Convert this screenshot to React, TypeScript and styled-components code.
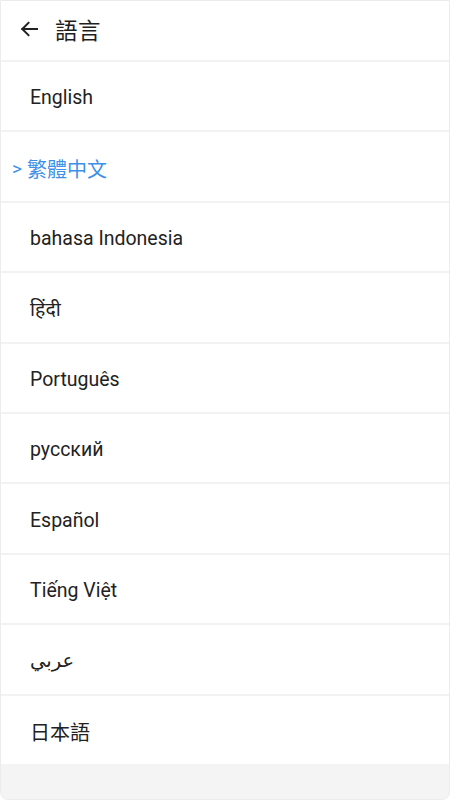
import React from "react";
import styled, { createGlobalStyle } from "styled-components";

const Global = createGlobalStyle`
  html, body { margin: 0; padding: 0; background: #ffffff; }
  body { font-family: Roboto, "Noto Sans", "Noto Sans CJK TC", sans-serif; }
  * { box-sizing: border-box; }
`;

const Frame = styled.div`
  width: 450px;
  height: 800px;
  background: #f4f4f4;
  border: 1px solid #ececec;
  border-radius: 0 0 8px 8px;
  overflow: hidden;
  display: flex;
  flex-direction: column;
`;

const Header = styled.header`
  height: 59px;
  background: #fff;
  display: flex;
  align-items: center;
  padding-left: 17px;
  padding-bottom: 3px;
  gap: 15px;
`;

const BackButton = styled.button`
  border: 0;
  background: none;
  padding: 0;
  width: 22px;
  height: 22px;
  display: flex;
  align-items: center;
  justify-content: center;
  color: #222;
`;

const Title = styled.h1`
  margin: 0;
  font-size: 22.5px;
  font-weight: 400;
  color: #1e1e1e;
  font-family: "Noto Sans CJK TC", sans-serif;
  letter-spacing: 0.5px;
  line-height: 1;
`;

const List = styled.ul`
  list-style: none;
  margin: 0;
  padding: 0;
  background: #fff;
`;

const Row = styled.li<{ $active?: boolean }>`
  height: 70.4px;
  border-top: 2.4px solid #f2f2f2;
  display: flex;
  align-items: center;
  padding-top: 3px;
  padding-left: ${(p) => (p.$active ? "11px" : "29px")};
  font-size: 19.5px;
  color: ${(p) => (p.$active ? "#3d8fe8" : "#222")};
  font-family: Roboto, "Noto Sans", "Noto Sans Devanagari", "DejaVu Sans", "Noto Sans CJK TC", sans-serif;
`;

const Marker = styled.span`
  margin-right: 5px;
  font-size: 19px;
`;

const CJK = styled.span`
  font-family: "Noto Sans CJK TC", sans-serif;
  font-size: 20px;
`;

const langs: { label: string; cjk?: boolean }[] = [
  { label: "English" },
  { label: "繁體中文", cjk: true },
  { label: "bahasa Indonesia" },
  { label: "हिंदी" },
  { label: "Português" },
  { label: "русский" },
  { label: "Español" },
  { label: "Tiếng Việt" },
  { label: "عربي" },
  { label: "日本語", cjk: true },
];

export default function App() {
  return (
    <>
      <Global />
      <Frame>
        <Header>
          <BackButton aria-label="back">
            <svg width="18" height="18" viewBox="0 0 18 18" fill="none" stroke="#222" strokeWidth="2" strokeLinecap="square">
              <path d="M17 9H2.5" />
              <path d="M8.5 2.8L2.3 9l6.2 6.2" />
            </svg>
          </BackButton>
          <Title>語言</Title>
        </Header>
        <List>
          {langs.map((l, i) => {
            const active = i === 1;
            return (
              <Row key={l.label} $active={active}>
                {active && <Marker>&gt;</Marker>}
                {l.cjk ? <CJK>{l.label}</CJK> : l.label}
              </Row>
            );
          })}
        </List>
      </Frame>
    </>
  );
}
